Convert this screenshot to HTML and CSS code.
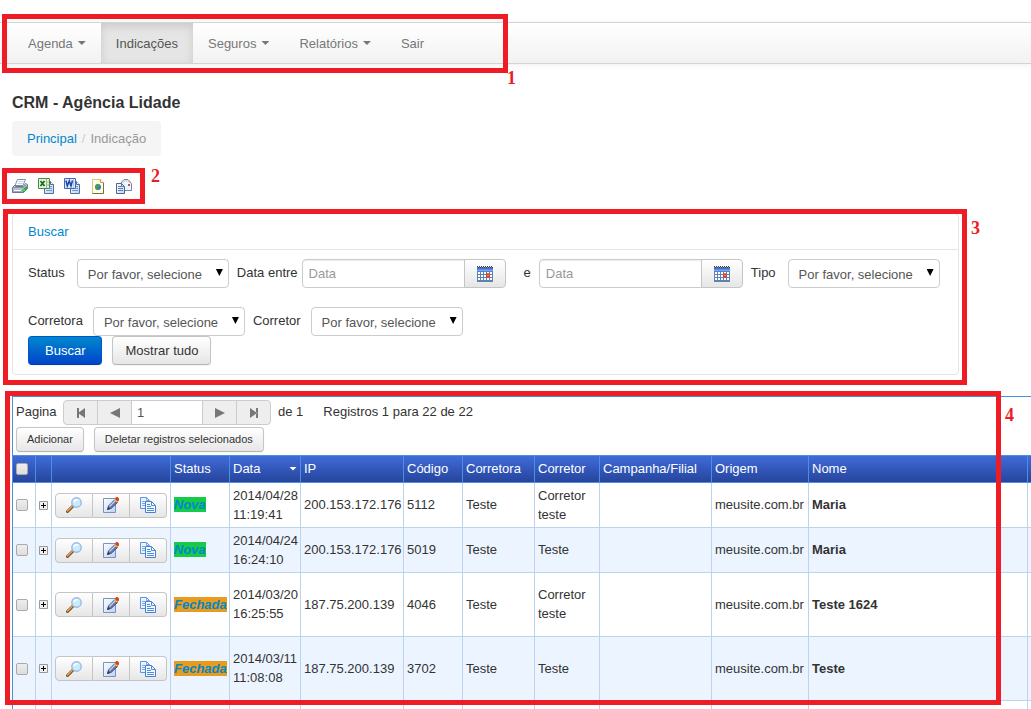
FILE: index.html
```html
<!DOCTYPE html>
<html lang="pt-BR">
<head>
<meta charset="utf-8">
<title>CRM - Agência Lidade</title>
<link rel="stylesheet" href="styles.css">
</head>
<body>
<svg class="sprite" aria-hidden="true">
  <defs>
    <linearGradient id="paper" x1="0" y1="0" x2="1" y2="1"><stop offset="0" stop-color="#fff"/><stop offset="1" stop-color="#b9d3f6"/></linearGradient>
    <linearGradient id="steel" x1="0" y1="0" x2="0" y2="1"><stop offset="0" stop-color="#f3f6fa"/><stop offset="1" stop-color="#8d9db4"/></linearGradient>
    <linearGradient id="blue" x1="0" y1="0" x2="0" y2="1"><stop offset="0" stop-color="#2d62d8"/><stop offset="1" stop-color="#86b4ff"/></linearGradient>
  </defs>
  <symbol id="i-print" viewBox="0 0 16 16">
    <path d="M5.500 1.500h8l-2.500 6h-8z" fill="#fff" stroke="#7c91ad"/>
    <path d="M6.500 3.500h5M5.700 5.500h5" stroke="#c3d1e4"/>
    <path d="M3 7L.5 9.500v5h11l4-4v-4l-2-1-2 3h-8z" fill="url(#steel)" stroke="#6a788d"/>
    <path d="M1 9.500h10l4-3" fill="none" stroke="#8492a8"/>
    <path d="M2 12.500h7" stroke="#fff"/>
    <path d="M11 11l4-3v2.500l-4 4z" fill="#1ca32a"/><path d="M10 11h3v2h-3z" fill="#3be046"/>
  </symbol>
  <symbol id="i-pages" viewBox="0 0 16 16">
    <path d="M6.500 3.500h6l3 3v9h-9z" fill="url(#paper)" stroke="#526da0"/>
    <path d="M12.500 3.500v3h3" fill="#fff" stroke="#526da0"/>
    <path d="M12 8.500h2M12 10.500h2M8 12.500h6" stroke="#6f94cf"/>
  </symbol>
  <symbol id="i-excel" viewBox="0 0 16 16">
    <use href="#i-pages"/>
    <path d="M.5.5h11v10H.5z" fill="#e3f2df" stroke="#498b43"/>
    <path d="M8.500 1v9M9 4h2M9 7h2" stroke="#8fc188"/>
    <path d="M2.500 3l4 5M6.500 3l-4 5" stroke="#19701b" stroke-width="1.800"/>
  </symbol>
  <symbol id="i-word" viewBox="0 0 16 16">
    <use href="#i-pages"/>
    <path d="M.5.5h11v10H.5z" fill="#dce9ff" stroke="#4468b5"/>
    <path d="M9.500 1v9" stroke="#a9c1ee"/>
    <path d="M2 2.500l1.300 5.500L5.300 3l1.700 5L8.500 2.500" fill="none" stroke="#1a48a2" stroke-width="1.500"/>
  </symbol>
  <symbol id="i-html" viewBox="0 0 16 16">
    <path d="M2.500 1.500h8l3 3v11h-11z" fill="#fffce8" stroke="#dcc56e"/>
    <path d="M10.500 1.500v3h3" fill="#fff" stroke="#b99c3d"/>
    <path d="M13.500 5v10.500h-11" fill="none" stroke="#806e38"/>
    <circle cx="8" cy="9" r="3" fill="#3577c9"/>
    <path d="M5.500 8l1.500-2 3 1-1 2-2 .5 1 1.500-1 1-1.500-1.500zM10 9l1 0-1 2z" fill="#42a934"/>
  </symbol>
  <symbol id="i-mail" viewBox="0 0 16 16">
    <path d="M4.500 5.500L8 1.500h4l3.500 4v7h-11z" fill="#eef4fb" stroke="#7288aa"/>
    <path d="M6.500 5.500L8.500 3h3.500l2 2.500" fill="#fff" stroke="#c0cbdb"/>
    <path d="M12 6h2v2h-2z" fill="#e44b25"/>
    <path d="M.5 5.500h5l3 3v7h-8z" fill="url(#paper)" stroke="#4f6690"/>
    <path d="M5.500 5.500v3h3M2 8.500h3M2 10.500h5M2 12.500h5" fill="none" stroke="#617ca9"/>
  </symbol>
  <symbol id="i-cal" viewBox="0 0 16 16">
    <path d="M0 1h16v15H0z" fill="#5e83b3"/>
    <path d="M0 2h16v3H0z" fill="url(#blue)"/>
    <path d="M0 .5h16" stroke="#444" stroke-dasharray="1 1"/>
    <path d="M1 1.500h15" stroke="#444" stroke-dasharray="1 1"/>
    <path d="M1 6h2v2H1zM4 6h2v2H4zM7 6h2v2H7zM10 6h2v2h-2zM13 6h2v2h-2zM1 9h2v2H1zM4 9h2v2H4zM7 9h2v2H7zM13 9h2v2h-2zM1 12h2v2H1zM4 12h2v2H4zM7 12h2v2H7zM10 12h2v2h-2zM13 12h2v2h-2z" fill="#fff"/>
    <path d="M10 8h2v3h-2z" fill="#fff" stroke="#e0431c" stroke-width="1.500"/>
  </symbol>
  <symbol id="i-view" viewBox="0 0 16 16">
    <path d="M1.500 14.500l5-5" stroke="#6d4a2c" stroke-width="3" stroke-linecap="round"/>
    <path d="M1.500 14l4.500-4.500" stroke="#eda44b" stroke-width="1.600" stroke-linecap="round"/>
    <circle cx="10.500" cy="5.500" r="4.700" fill="#c7edfc" stroke="#9db7e6" stroke-width="1.400"/>
    <path d="M8 5q1-3 4-2" fill="none" stroke="#fff" stroke-width="1.600"/>
  </symbol>
  <symbol id="i-edit" viewBox="0 0 16 16">
    <path d="M.5 1.500h12v14H.5z" fill="url(#paper)" stroke="#7394c4"/>
    <path d="M4.500 12.500l1-3.500L11.500 3l3 2.500L8 11.500z" fill="#6577ae" stroke="#44517a"/>
    <path d="M6.500 9.500l6-6" stroke="#c4d1f2" stroke-width="1.300"/>
    <path d="M11 3l1.500-2 3 2.500L14 5.500z" fill="#efbd3e"/>
    <path d="M13 0h1.500L16 1.500V3.500L14.500 4.500 12 2z" fill="#d8401f"/>
    <path d="M4 13l1.300-3 1.700 1.800z" fill="#3b3328"/>
  </symbol>
  <symbol id="i-copy" viewBox="0 0 16 16">
    <path d="M.5.500h6l3 3v8h-9z" fill="#eaf3ff" stroke="#5e93de"/>
    <path d="M6.500.500v3h3M2 4.500h3M2 6.500h3M2 8.500h3" fill="none" stroke="#75a6e8"/>
    <path d="M5.500 4.500h6l4 4v7h-10z" fill="#f2f8ff" stroke="#4780cf"/>
    <path d="M11.500 4.500v4h4M7 7.500h3M7 9.500h4M7 11.500h7M7 13.500h7" fill="none" stroke="#4f8cdb"/>
  </symbol>
  <symbol id="i-plus" viewBox="0 0 9 9">
    <path d="M.5.500h8v8h-8z" fill="#f0f0f0" stroke="#999"/><path d="M2 4.500h5M4.500 2v5" stroke="#000"/>
  </symbol>
  <symbol id="i-first" viewBox="0 0 10 10"><path d="M1 0h2v10H1zM9 0v10L2 5z" fill="#777"/></symbol>
  <symbol id="i-prev" viewBox="0 0 10 10"><path d="M10 0v10L0 5z" fill="#777"/></symbol>
  <symbol id="i-next" viewBox="0 0 10 10"><path d="M0 0v10l10-5z" fill="#777"/></symbol>
  <symbol id="i-last" viewBox="0 0 10 10"><path d="M7 0h2v10H7zM1 0v10l7-5z" fill="#777"/></symbol>
</svg>

<nav class="navbar">
  <ul class="menu">
    <li><a href="#">Agenda<span class="caret"></span></a></li>
    <li class="active"><a href="#">Indicações</a></li>
    <li><a href="#">Seguros<span class="caret"></span></a></li>
    <li><a href="#">Relatórios<span class="caret"></span></a></li>
    <li><a href="#">Sair</a></li>
  </ul>
  <div class="mark mark-nav"><span>1</span></div>
</nav>

<main class="page">
  <h1>CRM - Agência Lidade</h1>
  <div class="breadcrumb"><a href="#">Principal</a><i>/</i><span>Indicação</span></div>

  <div class="export">
    <a href="#" aria-label="Imprimir"><svg><use href="#i-print"/></svg></a>
    <a href="#" aria-label="Excel"><svg><use href="#i-excel"/></svg></a>
    <a href="#" aria-label="Word"><svg><use href="#i-word"/></svg></a>
    <a href="#" aria-label="HTML"><svg><use href="#i-html"/></svg></a>
    <a href="#" aria-label="E-mail"><svg><use href="#i-mail"/></svg></a>
    <div class="mark mark-export"><span>2</span></div>
  </div>

  <form class="panel">
    <div class="panel-head"><a href="#">Buscar</a></div>
    <div class="panel-body">
      <div class="fields">
        <div class="field"><label for="status">Status</label><span class="select"><select id="status"><option>Por favor, selecione</option></select></span></div>
        <div class="field date"><label for="from">Data entre</label><span class="group"><input id="from" type="text" placeholder="Data"><button type="button" aria-label="Calendário"><svg><use href="#i-cal"/></svg></button></span></div>
        <div class="field until"><label for="to">e</label><span class="group"><input id="to" type="text" placeholder="Data"><button type="button" aria-label="Calendário"><svg><use href="#i-cal"/></svg></button></span></div>
        <div class="field"><label for="tipo">Tipo</label><span class="select"><select id="tipo"><option>Por favor, selecione</option></select></span></div>
      </div>
      <div class="fields">
        <div class="field"><label for="corretora">Corretora</label><span class="select"><select id="corretora"><option>Por favor, selecione</option></select></span></div>
        <div class="field"><label for="corretor">Corretor</label><span class="select"><select id="corretor"><option>Por favor, selecione</option></select></span></div>
      </div>
      <div class="buttons"><button class="btn primary" type="button">Buscar</button><button class="btn" type="button">Mostrar tudo</button></div>
    </div>
    <div class="mark mark-search"><span>3</span></div>
  </form>

  <section class="grid">
    <div class="pager">
      <label for="pg">Pagina</label>
      <div class="pages">
        <button type="button" aria-label="Primeira"><svg><use href="#i-first"/></svg></button><button type="button" aria-label="Anterior"><svg><use href="#i-prev"/></svg></button><input id="pg" type="text" value="1"><button type="button" aria-label="Próxima"><svg><use href="#i-next"/></svg></button><button type="button" aria-label="Última"><svg><use href="#i-last"/></svg></button>
      </div>
      <span>de 1</span><span class="count">Registros 1 para 22 de 22</span>
    </div>
    <div class="bulk"><button class="btn small" type="button">Adicionar</button><button class="btn small" type="button">Deletar registros selecionados</button></div>
    <table>
      <colgroup><col class="c-check"><col class="c-plus"><col class="c-act"><col class="c-status"><col class="c-date"><col class="c-ip"><col class="c-code"><col class="c-firm"><col class="c-agent"><col class="c-camp"><col class="c-origin"><col><col class="c-end"></colgroup>
      <thead><tr><th><input type="checkbox" aria-label="Selecionar todos"></th><th></th><th></th><th>Status</th><th><div class="sorted">Data<span class="caret"></span></div></th><th>IP</th><th>Código</th><th>Corretora</th><th>Corretor</th><th>Campanha/Filial</th><th>Origem</th><th>Nome</th><th></th></tr></thead>
      <tbody>
        <tr>
          <td><input type="checkbox" aria-label="Selecionar 5112"></td><td><svg class="plus"><use href="#i-plus"/></svg></td>
          <td><div class="actions"><button type="button" aria-label="Ver"><svg><use href="#i-view"/></svg></button><button type="button" aria-label="Editar"><svg><use href="#i-edit"/></svg></button><button type="button" aria-label="Copiar"><svg><use href="#i-copy"/></svg></button></div></td>
          <td><a class="tag new" href="#">Nova</a></td><td>2014/04/28 11:19:41</td><td>200.153.172.176</td><td>5112</td><td>Teste</td><td>Corretor teste</td><td></td><td>meusite.com.br</td><td><b>Maria</b></td><td></td>
        </tr>
        <tr>
          <td><input type="checkbox" aria-label="Selecionar 5019"></td><td><svg class="plus"><use href="#i-plus"/></svg></td>
          <td><div class="actions"><button type="button" aria-label="Ver"><svg><use href="#i-view"/></svg></button><button type="button" aria-label="Editar"><svg><use href="#i-edit"/></svg></button><button type="button" aria-label="Copiar"><svg><use href="#i-copy"/></svg></button></div></td>
          <td><a class="tag new" href="#">Nova</a></td><td>2014/04/24 16:24:10</td><td>200.153.172.176</td><td>5019</td><td>Teste</td><td>Teste</td><td></td><td>meusite.com.br</td><td><b>Maria</b></td><td></td>
        </tr>
        <tr class="tall">
          <td><input type="checkbox" aria-label="Selecionar 4046"></td><td><svg class="plus"><use href="#i-plus"/></svg></td>
          <td><div class="actions"><button type="button" aria-label="Ver"><svg><use href="#i-view"/></svg></button><button type="button" aria-label="Editar"><svg><use href="#i-edit"/></svg></button><button type="button" aria-label="Copiar"><svg><use href="#i-copy"/></svg></button></div></td>
          <td><a class="tag closed" href="#">Fechada</a></td><td>2014/03/20 16:25:55</td><td>187.75.200.139</td><td>4046</td><td>Teste</td><td>Corretor teste</td><td></td><td>meusite.com.br</td><td><b>Teste 1624</b></td><td></td>
        </tr>
        <tr class="tall">
          <td><input type="checkbox" aria-label="Selecionar 3702"></td><td><svg class="plus"><use href="#i-plus"/></svg></td>
          <td><div class="actions"><button type="button" aria-label="Ver"><svg><use href="#i-view"/></svg></button><button type="button" aria-label="Editar"><svg><use href="#i-edit"/></svg></button><button type="button" aria-label="Copiar"><svg><use href="#i-copy"/></svg></button></div></td>
          <td><a class="tag closed" href="#">Fechada</a></td><td>2014/03/11 11:08:08</td><td>187.75.200.139</td><td>3702</td><td>Teste</td><td>Teste</td><td></td><td>meusite.com.br</td><td><b>Teste</b></td><td></td>
        </tr>
        <tr class="next"><td></td><td></td><td></td><td></td><td></td><td></td><td></td><td></td><td></td><td></td><td></td><td></td><td></td></tr>
      </tbody>
    </table>
    <div class="mark mark-grid"><span>4</span></div>
  </section>
</main>
</body>
</html>
```
FILE: styles.css
```css
* { box-sizing: border-box; }
body {
  margin: 0;
  padding-top: 22px;
  font: 13px/19px "Liberation Sans", Arial, sans-serif;
  color: #333;
  background: #fff;
}
a { color: #0088cc; text-decoration: none; }
button, input, select { font: inherit; color: inherit; margin: 0; }
svg { display: block; width: 16px; height: 16px; }
.sprite { position: absolute; width: 0; height: 0; }

.caret {
  width: 8px;
  height: 4px;
  background: currentColor;
  clip-path: polygon(0 0, 100% 0, 50% 100%);
}

/* Navigation */
.navbar {
  position: relative;
  border: 1px solid #d4d4d4;
  border-width: 1px 0;
  background: linear-gradient(#fff, #f2f2f2);
  box-shadow: 0 1px 6px rgba(0, 0, 0, .07);
}
.menu { display: flex; margin: 0; padding: 0 13px; list-style: none; }
.menu a {
  display: flex;
  align-items: center;
  gap: 5px;
  height: 40px;
  padding: 0 15px;
  color: #777;
}
.menu .active a {
  color: #555;
  background: #e5e5e5;
  box-shadow: inset 0 3px 8px rgba(0, 0, 0, .125);
}

/* Numbered frames drawn over the sections */
.mark { position: absolute; border: 5px solid #ee1c24; pointer-events: none; }
.mark span {
  position: absolute;
  left: 100%;
  font: bold 18px/20px "Liberation Serif", "Times New Roman", serif;
  color: #ee1c24;
}
.mark-nav { left: 2px; top: -9px; width: 506px; bottom: -10px; }
.mark-nav span { top: 49px; margin-left: 4px; }
.mark-export { left: -10px; top: -10px; width: 143px; bottom: -10px; }
.mark-export span { top: -7px; margin-left: 11px; }
.mark-search { left: -10px; top: -5px; right: -9px; bottom: -11px; }
.mark-search span { top: 4px; margin-left: 9px; }
.mark-grid { left: -8px; top: -6px; right: 30px; bottom: 4px; }
.mark-grid span { top: 9px; margin-left: 9px; }

.page { padding-left: 12px; }
h1 { margin: 29px 0 8px; font-size: 16px; line-height: 20px; }
.breadcrumb {
  display: flex;
  gap: 5px;
  width: fit-content;
  padding: 8px 15px;
  border-radius: 4px;
  color: #999;
  background: #f5f5f5;
}
.breadcrumb i { color: #ccc; font-style: normal; }
.export {
  position: relative;
  display: flex;
  gap: 10px;
  margin-top: 22px;
}

/* Search panel */
.panel {
  position: relative;
  margin: 19px 72px 0 0;
  border: 1px solid #e5e5e5;
  border-radius: 4px;
}
.panel-head { padding: 8px 15px; border-bottom: 1px solid #e5e5e5; }
.panel-body { padding: 9px 15px; }
.fields { display: flex; flex-wrap: wrap; gap: 8px; margin-bottom: 19px; }
.fields + .fields { margin-bottom: 0; }
.field { display: flex; align-items: flex-start; gap: 12px; }
.fields + .fields .field { gap: 10px; }
.field label { line-height: 27px; }
.field.date { gap: 4px; }
.field.until { gap: 8px; padding-left: 10px; }
.select { position: relative; }
.select::after {
  content: "";
  position: absolute;
  right: 6px;
  top: 10px;
  width: 7px;
  height: 7px;
  background: #000;
  clip-path: polygon(0 0, 100% 0, 50% 100%);
  pointer-events: none;
}
.select select {
  appearance: none;
  display: block;
  width: 152px;
  height: 29px;
  padding: 2px 18px 0 10px;
  border: 1px solid #ccc;
  border-radius: 4px;
  color: #555;
  background: #fff;
}
.group { display: flex; }
.group input {
  width: 163px;
  height: 29px;
  padding: 0 6px;
  border: 1px solid #ccc;
  border-radius: 4px 0 0 4px;
  box-shadow: inset 0 1px 1px rgba(0, 0, 0, .075);
}
.group input::placeholder { color: #999; opacity: 1; }
.group button {
  display: grid;
  place-items: center;
  width: 42px;
  margin-left: -1px;
  border: 1px solid #c5c5c5;
  border-radius: 0 4px 4px 0;
  background: linear-gradient(#fff, #e6e6e6);
}
.buttons { display: flex; gap: 10px; }
.btn {
  height: 29px;
  padding: 0 12px;
  border: 1px solid #c5c5c5;
  border-bottom-color: #b3b3b3;
  border-radius: 4px;
  background: linear-gradient(#fff, #e6e6e6);
  box-shadow: 0 1px 2px rgba(0, 0, 0, .05);
}
.btn.primary {
  padding: 0 16px;
  border-color: #0055cc #0055cc #003da0;
  color: #fff;
  background: linear-gradient(#0088cc, #0044cc);
}
.btn.small { height: 25px; padding: 0 10px; font-size: 11px; }

/* Records grid */
.grid {
  position: relative;
  margin-top: 21px;
  padding-top: 3px;
  border: 1px solid #4b8fe0;
  border-width: 1px 0 0 1px;
}
.pager, .bulk { display: flex; padding-left: 3px; }
.pager > label { width: 47px; line-height: 23px; }
.pager > span { line-height: 24px; margin-left: 7px; }
.pager > .count { margin-left: 20px; }
.pages { display: flex; }
.pages button, .pages input {
  width: 35px;
  height: 25px;
  padding: 0;
  border: 1px solid #ccc;
  background: #eee;
}
.pages > * + * { margin-left: -1px; }
.pages button { display: grid; place-items: center; }
.pages button:first-child { border-radius: 4px 0 0 4px; }
.pages button:last-child { border-radius: 0 4px 4px 0; }
.pages input { width: 72px; padding: 0 5px; background: #fff; color: #555; }
.pages svg { width: 10px; height: 10px; }
.bulk { gap: 10px; margin: 2px 0 3px; }

table { width: 100%; table-layout: fixed; border-collapse: separate; border-spacing: 0; }
.c-check { width: 22px; }
.c-plus { width: 16px; }
.c-act { width: 119px; }
.c-status, .c-code { width: 59px; }
.c-date { width: 71px; }
.c-ip { width: 103px; }
.c-firm { width: 72px; }
.c-agent { width: 65px; }
.c-camp { width: 112px; }
.c-origin { width: 97px; }
.c-end { width: 4px; }
th {
  height: 28px;
  padding: 0 3px 1px;
  border: 1px solid #4b8fe0;
  border-width: 1px 0 1px 1px;
  font-weight: normal;
  text-align: left;
  color: #fff;
}
thead tr { background: linear-gradient(#406ddb, #25439a); }
td {
  height: 45px;
  padding: 0 3px;
  border: 1px solid #bcd3ee;
  border-width: 0 0 1px 1px;
}
td:nth-child(n+4) { padding-bottom: 1px; }
th:first-child, td:first-child { border-left: 0; }
th:last-child, td:last-child { padding: 0; }
tbody tr:nth-child(even) { background: #ecf5ff; }
.tall td { height: 64px; }
.next td { height: 8px; border-bottom: 0; }
.sorted { display: flex; justify-content: space-between; align-items: center; }
table input {
  appearance: none;
  display: block;
  width: 12px;
  height: 12px;
  border: 1px solid #aaa;
  border-radius: 2px;
  background: linear-gradient(#eee, #ddd);
}
.plus { width: 9px; height: 9px; }
.actions { display: flex; width: 112px; }
.actions button {
  display: grid;
  place-items: center;
  flex: 1;
  height: 25px;
  padding: 0;
  border: 1px solid #c5c5c5;
  border-left-width: 0;
  background: linear-gradient(#fff, #e6e6e6);
}
.actions button:first-child { border-left-width: 1px; border-radius: 4px 0 0 4px; }
.actions button:last-child { border-radius: 0 4px 4px 0; }
.tag { font-weight: bold; font-style: italic; }
.new { background: #17cb49; }
.closed { background: #e89b1c; }
```
